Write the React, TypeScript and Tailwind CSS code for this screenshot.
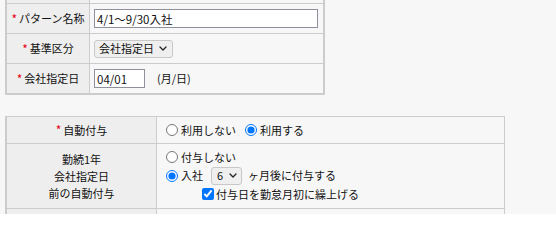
import React from "react";

const Req = () => <span className="text-[#e60012] text-[12px] mr-[2px]">*</span>;

const Chevron = () => (
  <svg width="8" height="5" viewBox="0 0 8 5" className="shrink-0">
    <path d="M1 1l3 3 3-3" fill="none" stroke="#222" strokeWidth="1.3" strokeLinecap="round" strokeLinejoin="round" />
  </svg>
);

const FakeSelect = ({ label, className }: { label: string; className: string }) => (
  <span
    className={`inline-flex items-center justify-between h-[18px] rounded-[3px] border border-[#c8c8c8] bg-[#efefef] ${className}`}
  >
    <span>{label}</span>
    <Chevron />
  </span>
);

const Radio = ({ name, checked }: { name: string; checked?: boolean }) => (
  <input type="radio" name={name} defaultChecked={checked} className="m-0 w-[12px] h-[12px] shrink-0" />
);

export default function App() {
  return (
    <div className="h-[214px] w-full overflow-hidden bg-[#f7f7f7] text-[11px] text-[#111] font-['Noto_Sans_CJK_JP',sans-serif]">
      {/* basic settings */}
      <div className="ml-[5px] w-[320px] border-l-2 border-r-2 border-b-2 border-[#cccccc]">
        <div className="flex h-[4px] border-b border-[#cccccc]">
          <div className="w-[83px] bg-[#eeeeee] border-r border-[#cccccc]" />
          <div className="flex-1" />
        </div>
        <div className="flex h-[30px] border-b border-[#cccccc]">
          <div className="w-[83px] bg-[#eeeeee] border-r border-[#cccccc] flex items-center justify-center">
            <Req />
            パターン名称
          </div>
          <div className="flex-1 flex items-center pl-[4px]">
            <input
              readOnly
              value="4/1～9/30入社"
              className="h-[19px] w-[224px] border border-[#8f8f9d] bg-white px-[2px] text-[11.5px] outline-none"
            />
          </div>
        </div>
        <div className="flex h-[30px] border-b border-[#cccccc]">
          <div className="w-[83px] bg-[#eeeeee] border-r border-[#cccccc] flex items-center justify-center">
            <Req />
            基準区分
          </div>
          <div className="flex-1 flex items-center pl-[4px]">
            <FakeSelect label="会社指定日" className="w-[79px] pl-[4px] pr-[5px]" />
          </div>
        </div>
        <div className="flex h-[29px]">
          <div className="w-[83px] bg-[#eeeeee] border-r border-[#cccccc] flex items-center justify-center">
            <Req />
            会社指定日
          </div>
          <div className="flex-1 flex items-center pl-[4px]">
            <input
              readOnly
              value="04/01"
              className="h-[19px] w-[51px] border border-[#8f8f9d] bg-white px-[2px] text-[11.5px] outline-none"
            />
            <span className="ml-[12px]">(月/日)</span>
          </div>
        </div>
      </div>

      {/* auto grant */}
      <div className="mt-[21px] ml-[5px] w-[500px] border-t border-l-2 border-r border-[#cccccc]">
        <div className="flex h-[27px] border-b border-[#cccccc]">
          <div className="w-[150px] bg-[#eeeeee] border-r border-[#cccccc] flex items-center justify-center">
            <Req />
            自動付与
          </div>
          <div className="flex-1 flex items-center pl-[9px]">
            <Radio name="auto" />
            <span className="ml-[3px]">利用しない</span>
            <span className="ml-[9px]" />
            <Radio name="auto" checked />
            <span className="ml-[3px]">利用する</span>
          </div>
        </div>
        <div className="flex h-[65px] border-b border-[#cccccc]">
          <div className="w-[150px] bg-[#eeeeee] border-r border-[#cccccc] flex flex-col items-center justify-center leading-[17px]">
            <span>勤続1年</span>
            <span>会社指定日</span>
            <span>前の自動付与</span>
          </div>
          <div className="flex-1 flex flex-col pt-[4px] pl-[9px]">
            <div className="flex items-center h-[18px]">
              <Radio name="before" />
              <span className="ml-[3px]">付与しない</span>
            </div>
            <div className="flex items-center h-[19px]">
              <Radio name="before" checked />
              <span className="ml-[3px]">入社</span>
              <FakeSelect label="6" className="ml-[8px] w-[31px] pl-[5px] pr-[4px]" />
              <span className="ml-[6px]">ヶ月後に付与する</span>
            </div>
            <div className="flex items-center h-[18px] pl-[36px]">
              <input type="checkbox" defaultChecked className="m-0 w-[12px] h-[12px] shrink-0" />
              <span className="ml-[2px]">付与日を勤怠月初に繰上げる</span>
            </div>
          </div>
        </div>
        <div className="flex h-[30px]">
          <div className="w-[150px] bg-[#eeeeee] border-r border-[#cccccc]" />
          <div className="flex-1" />
        </div>
      </div>
    </div>
  );
}
